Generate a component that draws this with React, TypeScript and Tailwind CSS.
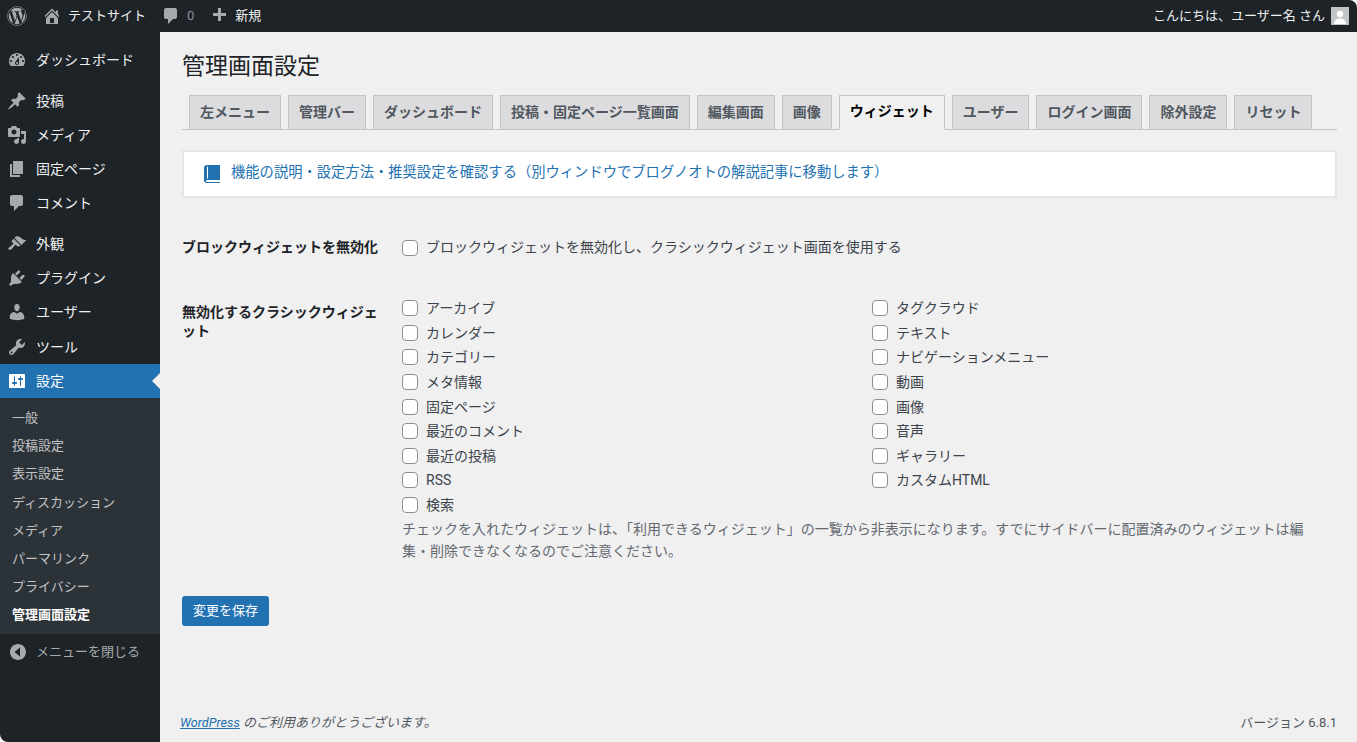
import { FaWordpress } from 'react-icons/fa';

const ICONS: Record<string, string> = {
  dashboard: 'M3.76 16h12.48c1.1-1.37 1.76-3.11 1.76-5 0-4.42-3.58-8-8-8s-8 3.58-8 8c0 1.89.66 3.63 1.76 5zM10 4c.55 0 1 .45 1 1s-.45 1-1 1-1-.45-1-1 .45-1 1-1zM6 6c.55 0 1 .45 1 1s-.45 1-1 1-1-.45-1-1 .45-1 1-1zm8 0c.55 0 1 .45 1 1s-.45 1-1 1-1-.45-1-1 .45-1 1-1zm-5.37 5.55L12 7v6c0 1.1-.9 2-2 2s-2-.9-2-2c0-.57.24-1.08.63-1.45zM4 10c.55 0 1 .45 1 1s-.45 1-1 1-1-.45-1-1 .45-1 1-1zm12 0c.55 0 1 .45 1 1s-.45 1-1 1-1-.45-1-1 .45-1 1-1zm-5 3c0-.55-.45-1-1-1s-1 .45-1 1 .45 1 1 1 1-.45 1-1z',
  post: 'M10.44 3.02l1.82-1.82 6.36 6.35-1.83 1.82c-1.05-.68-2.48-.57-3.41.36l-.75.75c-.92.93-1.04 2.35-.35 3.41l-1.83 1.82-2.41-2.41-2.8 2.79c-.42.42-3.38 2.71-3.8 2.29s1.86-3.39 2.28-3.81l2.79-2.79L4.1 9.36l1.83-1.82c1.05.69 2.48.57 3.4-.36l.75-.75c.93-.92 1.05-2.35.36-3.41z',
  media: 'M13 11V4c0-.55-.45-1-1-1h-1.67L9 1H5L3.67 3H2c-.55 0-1 .45-1 1v7c0 .55.45 1 1 1h10c.55 0 1-.45 1-1zM7 4.5c1.38 0 2.5 1.12 2.5 2.5S8.38 9.5 7 9.5 4.5 8.38 4.5 7 5.62 4.5 7 4.5zM14 6h5v10.5c0 1.38-1.12 2.5-2.5 2.5S14 17.88 14 16.5s1.12-2.5 2.5-2.5c.17 0 .34.02.5.05V9h-3V6zm-4 8.05V13h2v3.5c0 1.38-1.12 2.5-2.5 2.5S7 17.88 7 16.5 8.12 14 9.5 14c.17 0 .34.02.5.05z',
  page: 'M6 15V2h10v13H6zm-1 1h8v2H3V5h2v11z',
  comment: 'M5 2h9c1.1 0 2 .9 2 2v7c0 1.1-.9 2-2 2h-2l-5 5v-5H5c-1.1 0-2-.9-2-2V4c0-1.1.9-2 2-2z',
  appearance: 'M14.48 11.06L7.41 3.99l1.5-1.5c.5-.56 2.3-.47 3.51.32 1.21.8 1.43 1.28 2.91 2.1 1.18.64 2.45 1.26 4.45.85zm-.71.71L6.7 4.7 4.93 6.47c-.39.39-.39 1.02 0 1.41l1.06 1.06c.39.39.39 1.03 0 1.42-.6.6-1.43 1.11-2.21 1.69-.35.26-.7.53-1.01.84C1.43 13.23.91 14.76 1.71 15.56c.8.8 2.33.28 3.67-1.06.31-.31.58-.66.84-1.01.58-.78 1.09-1.61 1.69-2.21.39-.39 1.02-.39 1.41 0l1.06 1.06c.39.39 1.02.39 1.41 0z',
  plugin: 'M13.11 4.36L9.87 7.6 8 5.73l3.24-3.24c.35-.34 1.05-.2 1.56.32.52.51.66 1.21.31 1.55zm-8 1.77l.91-1.12 9.01 9.01-1.19.84c-.71.71-2.63 1.16-3.82 1.16H6.14L4.9 17.26c-.59.59-1.54.59-2.12 0-.59-.58-.59-1.53 0-2.12l1.24-1.24v-3.88c0-1.13.4-3.19 1.09-3.89zm7.26 3.97l3.24-3.24c.34-.35 1.04-.21 1.55.31.52.51.66 1.21.31 1.55l-3.24 3.25z',
  user: 'M10 9.25c-2.27 0-2.73-3.44-2.73-3.44C7 4.02 7.82 2 9.97 2c2.16 0 2.98 2.02 2.71 3.81 0 0-.41 3.44-2.68 3.44zm0 2.57L12.72 10c2.39 0 4.52 2.33 4.52 4.53v2.49s-3.65 1.13-7.24 1.13c-3.65 0-7.24-1.13-7.24-1.13v-2.49c0-2.25 1.94-4.48 4.47-4.48z',
  tools: 'M16.68 9.77c-1.34 1.34-3.3 1.67-4.95.99l-5.41 6.52c-.99.99-2.59.99-3.58 0s-.99-2.59 0-3.57l6.52-5.42c-.68-1.65-.35-3.61.99-4.95 1.28-1.28 3.12-1.62 4.72-1.06l-2.89 2.89 2.82 2.82 2.86-2.87c.53 1.58.18 3.39-1.08 4.65zM3.81 16.21c.4.39 1.04.39 1.43 0 .4-.4.4-1.04 0-1.43-.39-.4-1.03-.4-1.43 0-.39.39-.39 1.03 0 1.43z',
  settings: 'M18 16V4c0-.55-.45-1-1-1H3c-.55 0-1 .45-1 1v12c0 .55.45 1 1 1h14c.55 0 1-.45 1-1zM8 11h1c.55 0 1 .45 1 1s-.45 1-1 1H8v1.5c0 .28-.22.5-.5.5s-.5-.22-.5-.5V13H6c-.55 0-1-.45-1-1s.45-1 1-1h1V5.5c0-.28.22-.5.5-.5s.5.22.5.5V11zm5-2h-1c-.55 0-1-.45-1-1s.45-1 1-1h1V5.5c0-.28.22-.5.5-.5s.5.22.5.5V7h1c.55 0 1 .45 1 1s-.45 1-1 1h-1v5.5c0 .28-.22.5-.5.5s-.5-.22-.5-.5V9z',
  home: 'M16 8.5l1.53 1.53-1.06 1.06L10 4.62l-6.47 6.47-1.06-1.06L10 2.5l4 4v-2h2v4zm-6-2.46l6 5.99V18H4v-5.97zM12 17v-5H8v5h4z',
  plus: 'M17 7v3h-5v5H9v-5H4V7h5V2h3v5h5z',
  collapse: 'M10 2c-4.42 0-8 3.58-8 8s3.58 8 8 8 8-3.58 8-8-3.58-8-8-8zm2 12.5L6.5 10 12 5.5v9z',
};

function Dashicon({ name, className }: { name: string; className: string }) {
  return (
    <svg viewBox="0 0 20 20" fill="currentColor" className={className}>
      <path d={ICONS[name]} />
    </svg>
  );
}

const menuGroups = [
  [{ icon: 'dashboard', label: 'ダッシュボード' }],
  [
    { icon: 'post', label: '投稿' },
    { icon: 'media', label: 'メディア' },
    { icon: 'page', label: '固定ページ' },
    { icon: 'comment', label: 'コメント' },
  ],
  [
    { icon: 'appearance', label: '外観' },
    { icon: 'plugin', label: 'プラグイン' },
    { icon: 'user', label: 'ユーザー' },
    { icon: 'tools', label: 'ツール' },
  ],
];

const subMenu = ['一般', '投稿設定', '表示設定', 'ディスカッション', 'メディア', 'パーマリンク', 'プライバシー'];

const tabs = ['左メニュー', '管理バー', 'ダッシュボード', '投稿・固定ページ一覧画面', '編集画面', '画像', 'ウィジェット', 'ユーザー', 'ログイン画面', '除外設定', 'リセット'];

const widgetsLeft = ['アーカイブ', 'カレンダー', 'カテゴリー', 'メタ情報', '固定ページ', '最近のコメント', '最近の投稿', 'RSS', '検索'];
const widgetsRight = ['タグクラウド', 'テキスト', 'ナビゲーションメニュー', '動画', '画像', '音声', 'ギャラリー', 'カスタムHTML'];

function Check({ label }: { label: string }) {
  return (
    <label className="flex h-[24.6px] items-center">
      <input type="checkbox" className="mr-2 h-4 w-4 appearance-none rounded-[4px] border border-[#8c8f94] bg-white" />
      <span>{label}</span>
    </label>
  );
}

export default function App() {
  return (
    <div className="flex h-[742px] w-[1357px] flex-col overflow-hidden rounded-tr-lg rounded-bl-lg bg-[#f0f0f1] font-['Roboto','Noto_Sans_CJK_JP',sans-serif] text-sm text-[#3c434a]">
      {/* Admin bar */}
      <header className="flex h-8 shrink-0 items-center bg-[#1d2327] text-[13px] text-[#f0f0f1]">
        <FaWordpress className="ml-[7px] h-5 w-5 text-[#a7aaad]" />
        <Dashicon name="home" className="ml-[15px] h-5 w-5 text-[#a7aaad]" />
        <span className="ml-[6px]">テストサイト</span>
        <Dashicon name="comment" className="ml-[15px] h-5 w-5 text-[#a7aaad]" />
        <span className="ml-[6px] text-[#8c8f94]">0</span>
        <Dashicon name="plus" className="ml-[15px] h-5 w-5 text-[#a7aaad]" />
        <span className="ml-[6px]">新規</span>
        <span className="ml-auto">こんにちは、ユーザー名 さん</span>
        <span className="mr-2 ml-[6px] flex h-[18px] w-[18px] items-end justify-center overflow-hidden border border-[#c3c4c7] bg-[#c3c4c7]">
          <svg viewBox="0 0 16 16" fill="#ffffff" className="h-4 w-4">
            <circle cx="8" cy="6" r="3.2" />
            <path d="M2 16c0-3.5 2.5-5.5 6-5.5s6 2 6 5.5z" />
          </svg>
        </span>
      </header>

      <div className="flex min-h-0 flex-1">
        {/* Left menu */}
        <aside className="w-40 shrink-0 bg-[#1d2327] pt-[11px] text-[#f0f0f1]">
          {menuGroups.map((group, i) => (
            <ul key={i} className={i < 2 ? 'mb-[6.9px]' : ''}>
              {group.map((item) => (
                <li key={item.label} className="flex h-[34.1px] items-center">
                  <Dashicon name={item.icon} className="ml-[7px] h-5 w-5 text-[#a7aaad]" />
                  <span className="ml-[9px]">{item.label}</span>
                </li>
              ))}
            </ul>
          ))}
          <div className="relative flex h-[34px] items-center bg-[#2271b1] text-white">
            <Dashicon name="settings" className="ml-[7px] h-5 w-5" />
            <span className="ml-[9px]">設定</span>
            <span className="absolute top-[9px] right-0 border-y-8 border-r-8 border-y-transparent border-r-[#f0f0f1]" />
          </div>
          <ul className="bg-[#2c3338] pt-[6.5px] pb-[4.5px] text-[13px] text-[#c3c4c7]">
            {subMenu.map((label) => (
              <li key={label} className="flex h-[28.2px] items-center pl-3">{label}</li>
            ))}
            <li className="flex h-[28.2px] items-center pl-3 font-semibold text-white">管理画面設定</li>
          </ul>
          <div className="flex h-9 items-center text-[#a7aaad]">
            <Dashicon name="collapse" className="ml-[8px] h-5 w-5" />
            <span className="ml-[8px] text-[13px]">メニューを閉じる</span>
          </div>
        </aside>

        {/* Main */}
        <main className="flex min-w-0 flex-1 flex-col pr-5 pl-[22px]">
          <h1 className="mt-[18px] h-[45px] text-[23px] leading-[34px] text-[#1d2327]">管理画面設定</h1>

          <nav className="flex gap-[7px] border-b border-[#c3c4c7] pl-[7px]">
            {tabs.map((tab) => (
              <span
                key={tab}
                className={
                  tab === 'ウィジェット'
                    ? '-mb-px flex h-[35px] items-center border border-[#c3c4c7] border-b-[#f0f0f1] bg-[#f0f0f1] px-[10px] pb-[3px] font-semibold text-black'
                    : 'flex h-[34px] items-center border border-[#c3c4c7] border-b-0 bg-[#dcdcde] px-[10px] pb-[2px] font-semibold text-[#50575e]'
                }
              >
                {tab}
              </span>
            ))}
          </nav>

          <div className="mt-5 flex h-12 items-center border-2 border-[#e5e5e5] bg-white pl-5 text-[#2271b1]">
            <svg viewBox="0 0 16 18" className="h-[18px] w-4" fill="currentColor">
              <path d="M3 0h13v15H3.5c-.8 0-1.5.4-1.5 1s.7 1 1.5 1H16v1H3c-1.7 0-3-1-3-2.5V3c0-1.7 1.3-3 3-3z" />
              <rect x="3" y="1.5" width="1" height="12" fill="#ffffff" />
            </svg>
            <span className="mb-[3px] ml-[11px] text-[14.3px]">機能の説明・設定方法・推奨設定を確認する（別ウィンドウでブログノオトの解説記事に移動します）</span>
          </div>

          <section className="mt-[39px] flex">
            <div className="w-[220px] shrink-0 pr-5 font-semibold text-[#1d2327]">ブロックウィジェットを無効化</div>
            <label className="flex items-center">
              <input type="checkbox" className="mt-[1px] mr-2 h-4 w-4 appearance-none rounded-[4px] border border-[#8c8f94] bg-white" />
              <span>ブロックウィジェットを無効化し、クラシックウィジェット画面を使用する</span>
            </label>
          </section>

          <section className="mt-[39px] flex">
            <div className="w-[220px] shrink-0 pt-[7px] pr-5 leading-[19px] font-semibold text-[#1d2327]">無効化するクラシックウィジェット</div>
            <div className="min-w-0 flex-1">
              <div className="grid grid-cols-[470px_1fr]">
                <div>
                  {widgetsLeft.map((w) => <Check key={w} label={w} />)}
                </div>
                <div>
                  {widgetsRight.map((w) => <Check key={w} label={w} />)}
                </div>
              </div>
              <p className="mt-px w-[910px] leading-[22px] text-[#646970]">
                チェックを入れたウィジェットは、「利用できるウィジェット」の一覧から非表示になります。すでにサイドバーに配置済みのウィジェットは編集・削除できなくなるのでご注意ください。
              </p>
            </div>
          </section>

          <button className="mt-[34px] h-[30px] w-[87px] rounded-[3px] bg-[#2271b1] text-[13px] text-white">変更を保存</button>

          <footer className="mt-auto mb-[9px] flex items-center justify-between text-[13px] text-[#50575e]">
            <span className="-ml-[2px]"><a className="text-[12.7px] text-[#2271b1] italic underline">WordPress</a> <span className="italic">のご利用ありがとうございます。</span></span>
            <span>バージョン 6.8.1</span>
          </footer>
        </main>
      </div>
    </div>
  );
}
